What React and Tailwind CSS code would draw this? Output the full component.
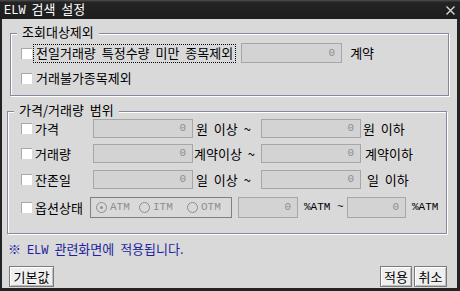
import React from "react";

const font = "font-['Noto_Sans_CJK_KR',sans-serif]";
const mono = "font-['Liberation_Mono',monospace] text-[11px]";

function Check() {
  return <span className="w-[11px] h-[11px] shrink-0 bg-white border-t border-l border-[#a8a8a8]" />;
}

function Field({ w }) {
  return (
    <div className={`${w} h-full shrink-0 bg-[#d3d3d3] border border-[#a6a6a6] flex items-center justify-end pr-[6px] text-[#8e8e8e] ${mono}`}>
      0
    </div>
  );
}

function Radio({ on, label, w }) {
  return (
    <div className={`${w} flex items-center shrink-0`}>
      <span className="w-[11px] h-[11px] rounded-full border border-[#8e8e8e] flex items-center justify-center">
        {on && <span className="w-[3px] h-[3px] rounded-full bg-[#8e8e8e]" />}
      </span>
      <span className={`ml-[3px] text-[#8e8e8e] ${mono}`}>{label}</span>
    </div>
  );
}

function Btn({ w, children }) {
  return (
    <button className={`${w} h-[21px] bg-[#efefef] border border-[#7c7c7c] shadow-[inset_1px_1px_0_#fff,inset_-1px_-1px_0_#bdbdbd] flex items-center justify-center text-black leading-none`}>
      {children}
    </button>
  );
}

function RangeRow({ label, mid, midPad, right, rightPad, mt }) {
  return (
    <div className={`flex items-center h-[19px] ${mt}`}>
      <div className="w-[72px] flex items-center shrink-0">
        <Check />
        <span className="ml-[3px]">{label}</span>
      </div>
      <Field w="w-[100px]" />
      <div className={`w-[68px] shrink-0 whitespace-nowrap ${midPad}`}>{mid}</div>
      <Field w="w-[100px]" />
      <span className={`whitespace-nowrap ${rightPad}`}>{right}</span>
    </div>
  );
}

export default function App() {
  return (
    <div className={`w-[460px] h-[291px] bg-[#232323] flex flex-col text-[13px] text-black ${font} [word-spacing:3px]`}>
      <div className="h-[19px] shrink-0 flex items-center justify-between bg-gradient-to-b from-[#505050] via-[#232323] to-[#1e1e1e] from-[0%] via-[12%] pl-[4px] pr-[5px]">
        <span className="text-white text-[13px] leading-none">
          <span className={mono + " text-[12px]"}>ELW</span> 검색 설정
        </span>
        <svg width="9" height="9" viewBox="0 0 9 9" className="mt-[1px]">
          <path d="M0.5 0.5 L8.5 8.5 M8.5 0.5 L0.5 8.5" stroke="#d8d8d8" strokeWidth="1.4" />
        </svg>
      </div>

      <div className="flex-1 ml-[2px] mr-[3px] mb-[3px] bg-[#d9d9d9] flex flex-col">
        {/* 조회대상제외 */}
        <div className="relative ml-[8px] mt-[14px] w-[439px] h-[63px] shrink-0 border border-[#868a9c] shadow-[1px_1px_0_#fff,inset_1px_1px_0_#fff] pl-[10px]">
          <span className="absolute left-[6px] -top-[10px] px-[5px] bg-[#d9d9d9] leading-4">조회대상제외</span>
          <div className="flex items-center h-[20px] mt-[9px]">
            <Check />
            <span className="ml-[1px] h-[19px] flex items-center px-[2px] border border-dotted border-black whitespace-nowrap">
              전일거래량 특정수량 미만 종목제외
            </span>
            <div className="ml-[5px] h-full flex">
              <Field w="w-[101px]" />
            </div>
            <span className="ml-[8px]">계약</span>
          </div>
          <div className="flex items-center h-[20px] mt-[5px]">
            <Check />
            <span className="ml-[4px]">거래불가종목제외</span>
          </div>
        </div>

        {/* 가격/거래량 범위 */}
        <div className="relative ml-[5px] mt-[15px] w-[440px] h-[123px] shrink-0 border border-[#868a9c] shadow-[1px_1px_0_#fff,inset_1px_1px_0_#fff] pl-[13px]">
          <span className="absolute left-[6px] -top-[10px] px-[5px] bg-[#d9d9d9] leading-4 whitespace-nowrap">가격/거래량 범위</span>
          <RangeRow label="가격" mid="원 이상 ~" midPad="pl-[3px]" right="원 이하" rightPad="ml-[2px]" mt="mt-[7px]" />
          <RangeRow label="거래량" mid="계약이상 ~" midPad="pl-[1px]" right="계약이하" rightPad="ml-[4px]" mt="mt-[6px]" />
          <RangeRow label="잔존일" mid="일 이상 ~" midPad="pl-[3px]" right="일 이하" rightPad="ml-[6px]" mt="mt-[7px]" />
          <div className="flex items-center h-[21px] mt-[8px]">
            <div className="w-[69px] flex items-center shrink-0">
              <Check />
              <span className="ml-[3px]">옵션상태</span>
            </div>
            <div className="w-[142px] h-[21px] shrink-0 border border-[#808080] flex items-center pl-[5px]">
              <Radio on label="ATM" w="w-[43px]" />
              <Radio label="ITM" w="w-[48px]" />
              <Radio label="OTM" w="w-[40px]" />
            </div>
            <div className="ml-[6px] h-full flex">
              <Field w="w-[60px]" />
            </div>
            <span className={`ml-[6px] w-[43px] shrink-0 whitespace-nowrap [word-spacing:0px] ${mono}`}>%ATM ~</span>
            <div className="h-full flex">
              <Field w="w-[59px]" />
            </div>
            <span className={`ml-[6px] ${mono}`}>%ATM</span>
          </div>
        </div>

        <div className="ml-[6px] mt-[7px] leading-4 text-[#1f1f9f] whitespace-nowrap">
          ※ <span className={mono + " text-[12px]"}>ELW</span> 관련화면에 적용됩니다.
        </div>

        <div className="mt-[7px] flex justify-between ml-[7px] mr-[10px]">
          <Btn w="w-[45px]">기본값</Btn>
          <div className="flex gap-[2px]">
            <Btn w="w-[32px]">적용</Btn>
            <Btn w="w-[33px]">취소</Btn>
          </div>
        </div>
      </div>
    </div>
  );
}
